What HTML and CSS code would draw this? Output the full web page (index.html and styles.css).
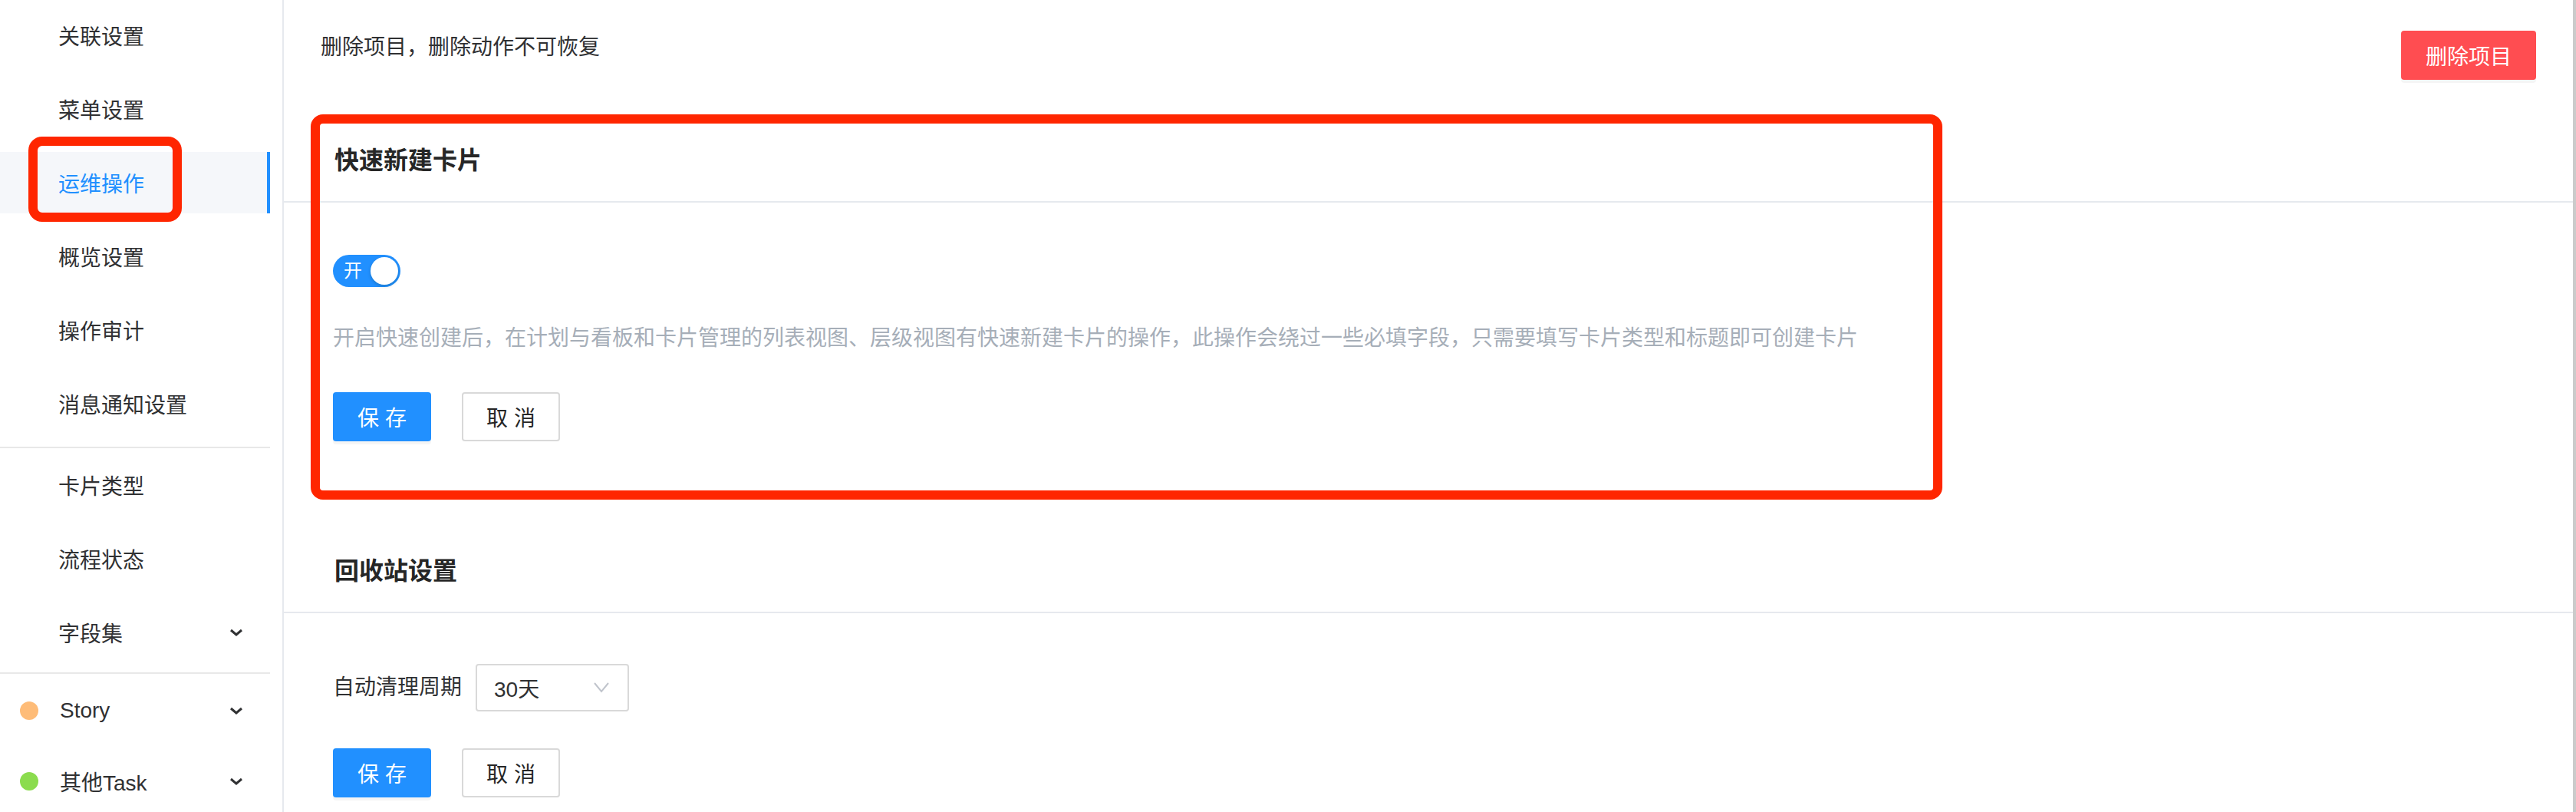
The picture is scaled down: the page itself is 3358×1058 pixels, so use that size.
FILE: index.html
```html
<!DOCTYPE html>
<html lang="zh-CN">
<head>
    <meta charset="UTF-8">
    <meta name="viewport" content="width=device-width, initial-scale=1.0">
    <title>项目设置 - 运维操作</title>
    <link rel="stylesheet" href="styles.css">
</head>
<body>
    <div class="page">
        <aside class="sidebar">
            <ul class="menu">
                <li class="menu-item">关联设置</li>
                <li class="menu-item">菜单设置</li>
                <li class="menu-item active">运维操作</li>
                <li class="menu-item">概览设置</li>
                <li class="menu-item">操作审计</li>
                <li class="menu-item">消息通知设置</li>
                <li class="menu-divider"></li>
                <li class="menu-item">卡片类型</li>
                <li class="menu-item">流程状态</li>
                <li class="menu-item menu-sub">
                    <span>字段集</span>
                    <svg class="chevron" width="18" height="10" viewBox="0 0 18 10"><path d="M2 2 L9 8 L16 2" /></svg>
                </li>
                <li class="menu-divider"></li>
                <li class="menu-item menu-sub with-dot">
                    <span class="dot dot-story"></span>
                    <span>Story</span>
                    <svg class="chevron" width="18" height="10" viewBox="0 0 18 10"><path d="M2 2 L9 8 L16 2" /></svg>
                </li>
                <li class="menu-item menu-sub with-dot">
                    <span class="dot dot-task"></span>
                    <span>其他Task</span>
                    <svg class="chevron" width="18" height="10" viewBox="0 0 18 10"><path d="M2 2 L9 8 L16 2" /></svg>
                </li>
            </ul>
        </aside>

        <main class="content">
            <div class="danger-row">
                <p class="danger-text">删除项目，删除动作不可恢复</p>
                <button class="btn btn-danger">删除项目</button>
            </div>

            <section class="panel">
                <div class="panel-head">
                    <h2>快速新建卡片</h2>
                </div>
                <div class="panel-body">
                    <div class="switch on">
                        <span class="switch-label">开</span>
                        <span class="switch-knob"></span>
                    </div>
                    <p class="panel-desc">开启快速创建后，在计划与看板和卡片管理的列表视图、层级视图有快速新建卡片的操作，此操作会绕过一些必填字段，只需要填写卡片类型和标题即可创建卡片</p>
                    <div class="actions">
                        <button class="btn btn-primary">保 存</button>
                        <button class="btn btn-default">取 消</button>
                    </div>
                </div>
            </section>

            <section class="panel">
                <div class="panel-head">
                    <h2>回收站设置</h2>
                </div>
                <div class="panel-body">
                    <div class="form-row">
                        <label class="form-label">自动清理周期</label>
                        <div class="select">
                            <span>30天</span>
                            <svg width="20" height="14" viewBox="0 0 20 14"><path d="M1 1 L10 12 L19 1" /></svg>
                        </div>
                    </div>
                    <div class="actions">
                        <button class="btn btn-primary">保 存</button>
                        <button class="btn btn-default">取 消</button>
                    </div>
                </div>
            </section>
        </main>
    </div>

    <div class="mark mark-menu"></div>
    <div class="mark mark-panel"></div>
</body>
</html>
```

FILE: styles.css
```css
body {
    margin: 0;
    font-family: "Liberation Sans", "Noto Sans CJK SC", sans-serif;
    color: #303133;
    background: #fff;
    overflow: hidden;
}

.page {
    display: flex;
    height: 100vh;
}

/* sidebar */
.sidebar {
    width: 370px;
    flex-shrink: 0;
    border-right: 2px solid #e6e9ee;
    box-sizing: border-box;
}

.menu {
    list-style: none;
    margin: 0;
    padding: 6px 0 0;
    width: 352px;
}

.menu-item {
    display: flex;
    align-items: center;
    height: 80px;
    margin-bottom: 16px;
    padding-left: 76px;
    box-sizing: border-box;
    font-size: 28px;
    color: #303133;
}

.menu-item.active {
    background-color: #f5f7fa;
    color: #2190ff;
    border-right: 4px solid #2190ff;
}

.menu-sub {
    margin-bottom: 12px;
    padding-right: 35px;
}

.menu-sub.with-dot {
    padding-left: 26px;
}

.menu-sub .chevron {
    margin-left: auto;
    fill: none;
    stroke: #303133;
    stroke-width: 3;
}

.dot {
    width: 24px;
    height: 24px;
    border-radius: 50%;
    margin-right: 28px;
}

.dot-story {
    background-color: #febc78;
}

.dot-task {
    background-color: #8bdc4e;
}

.menu-divider {
    height: 2px;
    background-color: #e8e8e8;
    margin-bottom: 8px;
}

/* content */
.content {
    flex: 1;
    border-right: 4px solid #cbcbcb;
}

.danger-row {
    display: flex;
    justify-content: space-between;
    align-items: flex-start;
    padding: 40px 48px 0;
}

.danger-text {
    margin: 0;
    font-size: 28px;
    line-height: 44px;
}

.btn {
    height: 64px;
    border-radius: 4px;
    font-family: inherit;
    font-size: 28px;
    cursor: pointer;
    box-sizing: border-box;
}

.btn-danger {
    padding: 0 32px;
    background-color: #ff4d51;
    color: #fff;
    border: none;
    box-shadow: 0 4px 0 rgba(0, 0, 0, 0.04);
}

.btn-primary {
    width: 128px;
    background-color: #2190ff;
    color: #fff;
    border: none;
    box-shadow: 0 4px 0 rgba(0, 0, 0, 0.04);
}

.btn-default {
    width: 128px;
    background-color: #fff;
    color: #262626;
    border: 2px solid #d9d9d9;
}

.panel-head {
    display: flex;
    align-items: center;
    height: 112px;
    margin-top: 46px;
    padding-left: 66px;
    border-bottom: 2px solid #e6e9ee;
    box-sizing: content-box;
}

.panel + .panel .panel-head {
    margin-top: 0;
}

.panel-head h2 {
    margin: 0;
    font-size: 32px;
    font-weight: bold;
    color: #262626;
}

.panel-body {
    padding: 66px 0 110px 64px;
}

.panel:last-child .panel-body {
    padding-bottom: 0;
}

.switch {
    display: flex;
    align-items: center;
    justify-content: space-between;
    width: 88px;
    height: 42px;
    margin-top: 2px;
    padding: 0 3px 0 14px;
    border-radius: 21px;
    background-color: #2190ff;
    box-sizing: border-box;
}

.switch-label {
    color: #fff;
    font-size: 24px;
    line-height: 42px;
}

.switch-knob {
    width: 36px;
    height: 36px;
    border-radius: 50%;
    background-color: #fff;
    box-shadow: 0 2px 4px rgba(0, 35, 11, 0.2);
}

.panel-desc {
    margin: 45px 0 0;
    font-size: 28px;
    line-height: 44px;
    color: #a6aeb8;
}

.actions {
    display: flex;
    gap: 40px;
    margin-top: 48px;
}

.form-row {
    display: flex;
    align-items: center;
    gap: 18px;
}

.form-label {
    font-size: 28px;
    line-height: 44px;
}

.select {
    display: flex;
    align-items: center;
    justify-content: space-between;
    width: 200px;
    height: 62px;
    padding: 0 24px 0 22px;
    border: 2px solid #d9d9d9;
    border-radius: 4px;
    box-sizing: border-box;
    font-size: 28px;
}

.select svg {
    fill: none;
    stroke: #c0c4cc;
    stroke-width: 2;
}

/* red annotation boxes drawn over the screenshot */
.mark {
    position: absolute;
    border: 12px solid #ff2600;
    box-sizing: border-box;
    pointer-events: none;
}

.mark-menu {
    left: 37px;
    top: 178px;
    width: 200px;
    height: 111px;
    border-radius: 18px;
}

.mark-panel {
    left: 405px;
    top: 149px;
    width: 2127px;
    height: 502px;
    border-radius: 16px;
}
```
